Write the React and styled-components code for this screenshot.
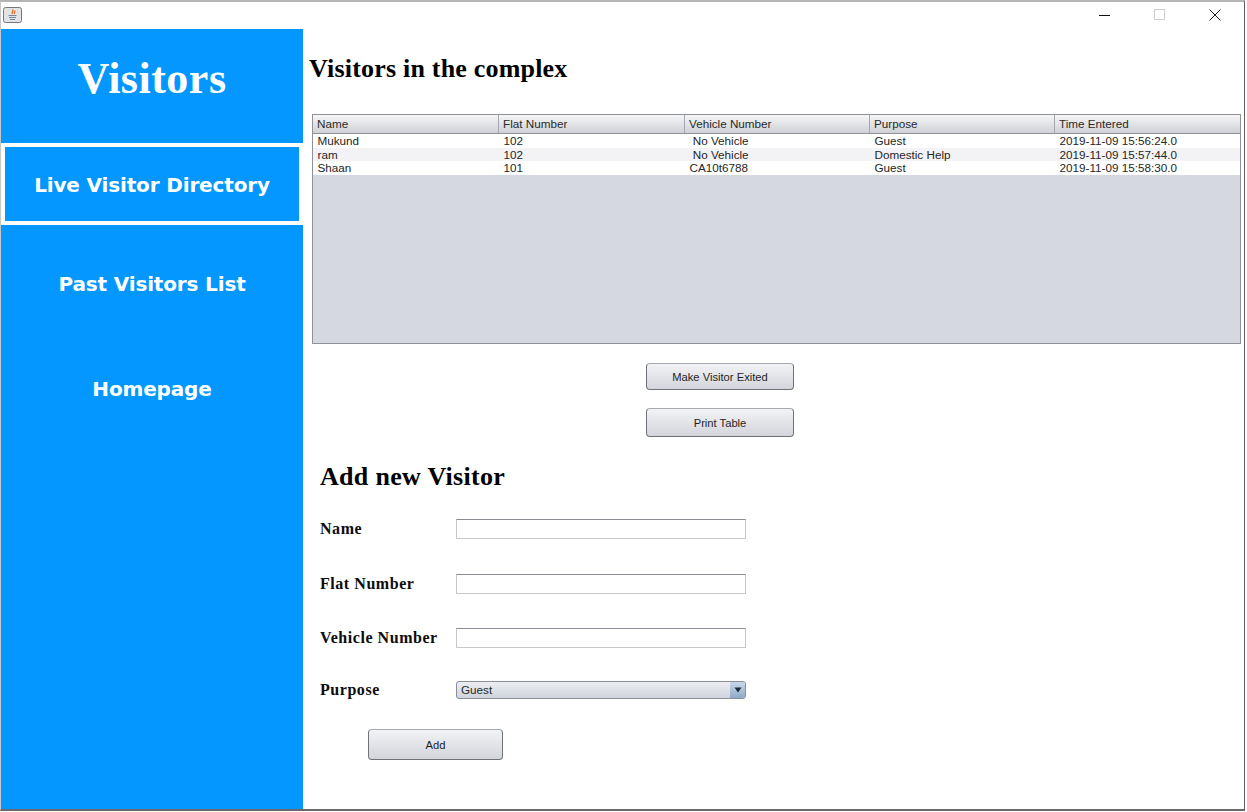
import React from "react";
import styled, { createGlobalStyle } from "styled-components";

const visitors = [
  { name: "Mukund", flat: "102", vehicle: " No Vehicle", purpose: "Guest", time: "2019-11-09 15:56:24.0" },
  { name: "ram", flat: "102", vehicle: " No Vehicle", purpose: "Domestic Help", time: "2019-11-09 15:57:44.0" },
  { name: "Shaan", flat: "101", vehicle: "CA10t6788", purpose: "Guest", time: "2019-11-09 15:58:30.0" },
];
const columns = ["Name", "Flat Number", "Vehicle Number", "Purpose", "Time Entered"];
const fields = [
  { label: "Name", top: 0 },
  { label: "Flat Number", top: 35 },
  { label: "Vehicle Number", top: 34 },
];

const GlobalStyle = createGlobalStyle`
  html, body {
    margin: 0;
    padding: 0;
    background: #ffffff;
  }
  * {
    box-sizing: border-box;
  }
`;

const JavaIcon = () => (
  <svg width="19" height="16" viewBox="0 0 19 16">
    <rect x="0.5" y="0.5" width="18" height="15" rx="2" fill="#e2e3e6" stroke="#74767a" />
    <path d="M9.5 2.5c1.6 1.5-1.4 2.4 0 4.4M11.6 3.6c.9 1.1-1.1 1.7 0 3.2" fill="none" stroke="#ea6f22" strokeWidth="1.3" />
    <path d="M5.5 8.5h8M6 10.5h7M7 12.5h5" stroke="#7a8698" strokeWidth="1.1" />
  </svg>
);

const WindowIcon = ({ kind }) => (
  <svg width="14" height="14" viewBox="0 0 14 14">
    {kind === "min" && <path d="M1 7.5h11" stroke="#111" strokeWidth="1" />}
    {kind === "max" && <rect x="1.5" y="1.5" width="10" height="10" fill="none" stroke="#cfcfcf" />}
    {kind === "close" && <path d="M1.5 1.5l11 11M12.5 1.5l-11 11" stroke="#222" strokeWidth="1" />}
  </svg>
);

export default function App() {
  return (
    <Page>
      <GlobalStyle />
      <Frame>
        <TitleBar>
          <JavaIcon />
          <WindowButtons>
            <WindowIcon kind="min" />
            <WindowIcon kind="max" />
            <WindowIcon kind="close" />
          </WindowButtons>
        </TitleBar>
        <Body>
          <Sidebar>
            <Brand>Visitors</Brand>
            <NavItem $active>Live Visitor Directory</NavItem>
            <NavItem $height={118}>Past Visitors List</NavItem>
            <NavItem $height={92}>Homepage</NavItem>
          </Sidebar>
          <Main>
            <PageTitle>Visitors in the complex</PageTitle>
            <Table>
              <HeaderRow>
                {columns.map((col) => (
                  <HeaderCell key={col}>{col}</HeaderCell>
                ))}
              </HeaderRow>
              {visitors.map((v, i) => (
                <Row key={v.name} $striped={i % 2 === 1}>
                  <Cell>{v.name}</Cell>
                  <Cell>{v.flat}</Cell>
                  <Cell>{v.vehicle}</Cell>
                  <Cell>{v.purpose}</Cell>
                  <Cell>{v.time}</Cell>
                </Row>
              ))}
            </Table>
            <Actions>
              <JavaButton $width={148} $height={27}>Make Visitor Exited</JavaButton>
              <JavaButton $width={148} $height={29}>Print Table</JavaButton>
            </Actions>
            <Form>
              <FormTitle>Add new Visitor</FormTitle>
              {fields.map((f) => (
                <FieldRow key={f.label} $top={f.top}>
                  <FieldLabel>{f.label}</FieldLabel>
                  <TextInput />
                </FieldRow>
              ))}
              <PurposeRow>
                <FieldLabel>Purpose</FieldLabel>
                <Select>
                  Guest
                  <SelectArrow>
                    <svg width="8" height="6" viewBox="0 0 8 6">
                      <path d="M0.5 0.5h7L4 5.5z" fill="#1d2a3a" />
                    </svg>
                  </SelectArrow>
                </Select>
              </PurposeRow>
              <AddRow>
                <JavaButton $width={135} $height={31}>Add</JavaButton>
              </AddRow>
            </Form>
          </Main>
        </Body>
      </Frame>
    </Page>
  );
}

const Page = styled.div`
  width: 1247px;
  height: 812px;
  overflow: hidden;
  background: #ffffff;
`;
const Frame = styled.div`
  width: 1245px;
  height: 811px;
  border-top: 2px solid #b4b4b4;
  border-left: 1px solid #c4c6c8;
  border-right: 1px solid #5f5f5f;
  border-bottom: 2px solid #6a6a6a;
  display: flex;
  flex-direction: column;
`;
const TitleBar = styled.div`
  height: 27px;
  flex: none;
  display: flex;
  justify-content: space-between;
  padding: 5px 22px 0 2px;
  align-items: flex-start;
`;
const WindowButtons = styled.div`
  display: flex;
  gap: 41px;
  margin-top: 1px;
`;
const Body = styled.div`
  flex: 1;
  display: flex;
  min-height: 0;
`;
const Sidebar = styled.nav`
  width: 302px;
  flex: none;
  background: #0497ff;
  display: flex;
  flex-direction: column;
`;
const Brand = styled.div`
  height: 114px;
  padding-top: 23px;
  text-align: center;
  font: bold 44px/54px "Liberation Serif", serif;
  letter-spacing: 0.5px;
  color: #ffffff;
`;
const NavItem = styled.div`
  height: ${(p) => (p.$active ? "82px" : `${p.$height}px`)};
  display: flex;
  align-items: center;
  justify-content: center;
  color: #ffffff;
  font: bold 20px "DejaVu Sans", Verdana, sans-serif;
  letter-spacing: -0.15px;
  padding-top: ${(p) => (p.$active ? "2px" : "0")};
  border: ${(p) => (p.$active ? "4px solid #ffffff" : "0")};
`;
const Main = styled.main`
  flex: 1;
  min-width: 0;
  display: flex;
  flex-direction: column;
  padding: 0 3px 0 9px;
`;
const PageTitle = styled.h1`
  margin: 25px 0 0 -3px;
  height: 60px;
  font: bold 26px/29px "Liberation Serif", serif;
  letter-spacing: 0.2px;
  color: #000000;
`;
const Table = styled.div`
  height: 230px;
  background: #d5d8e1;
  border: 1px solid #8e9197;
`;
const tableColumns = "186px 186px 185px 185px 1fr";
const HeaderRow = styled.div`
  display: grid;
  grid-template-columns: ${tableColumns};
  height: 19px;
  border-bottom: 1px solid #8e9197;
  background: linear-gradient(#f6f6f7, #cfd1d6);
`;
const HeaderCell = styled.div`
  font: 11.7px/18px "Liberation Sans", Arial, sans-serif;
  color: #2a2a2a;
  padding-left: 4px;
  border-right: 1px solid #a4a7ad;
  &:last-child {
    border-right: 0;
  }
`;
const Row = styled.div`
  display: grid;
  grid-template-columns: ${tableColumns};
  height: 13.6px;
  background: ${(p) => (p.$striped ? "#f3f3f5" : "#ffffff")};
`;
const Cell = styled.div`
  font: 11.7px/14px "Liberation Sans", Arial, sans-serif;
  color: #262626;
  padding-left: 4.5px;
  white-space: pre;
`;
const Actions = styled.div`
  display: flex;
  flex-direction: column;
  align-items: flex-start;
  gap: 18px;
  margin: 19px 0 0 334px;
`;
const JavaButton = styled.button`
  width: ${(p) => p.$width}px;
  height: ${(p) => p.$height}px;
  padding: 0;
  border: 1px solid #6f7379;
  border-top-color: #a6a9af;
  border-radius: 4px;
  background: linear-gradient(#f2f3f5, #d3d5db);
  font: 11.2px "Liberation Sans", Arial, sans-serif;
  color: #1f1f1f;
`;
const Form = styled.section`
  display: flex;
  flex-direction: column;
  padding-left: 8px;
`;
const FormTitle = styled.h2`
  margin: 26px 0 0;
  height: 56px;
  font: bold 26px/28px "Liberation Serif", serif;
  letter-spacing: 0.3px;
  color: #000000;
`;
const FieldRow = styled.div`
  display: flex;
  align-items: center;
  height: 20px;
  margin-top: ${(p) => p.$top}px;
`;
const FieldLabel = styled.label`
  width: 136px;
  flex: none;
  margin-bottom: 1px;
  font: bold 16px "Liberation Serif", serif;
  letter-spacing: 0.55px;
  color: #0d0d0d;
`;
const TextInput = styled.input`
  width: 290px;
  height: 20px;
  padding: 0 4px;
  border: 1px solid #c6c8cc;
  border-top: 1px solid #8b8d92;
  background: #ffffff;
`;
const PurposeRow = styled.div`
  display: flex;
  align-items: center;
  height: 18px;
  margin-top: 33px;
`;
const Select = styled.div`
  position: relative;
  width: 290px;
  height: 18px;
  padding-left: 4px;
  border: 1px solid #8a8e96;
  border-radius: 3px;
  background: linear-gradient(#eceef2, #cfd3dc);
  font: 11.7px/16px "Liberation Sans", Arial, sans-serif;
  color: #2a2a2a;
`;
const SelectArrow = styled.span`
  position: absolute;
  top: 0;
  right: 0;
  bottom: 0;
  width: 15px;
  display: flex;
  align-items: center;
  justify-content: center;
  background: linear-gradient(#c8d7e8, #8fabc9);
  border-radius: 0 2px 2px 0;
`;
const AddRow = styled.div`
  margin: 30px 0 0 48px;
`;
